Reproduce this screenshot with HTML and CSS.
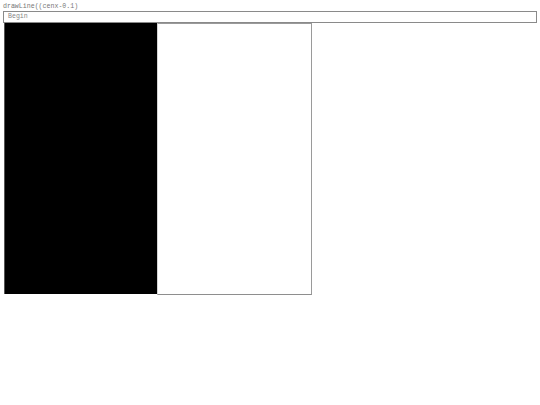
FILE: index.html
```html
<!DOCTYPE html>
<html>
<head>
<meta charset="utf-8">
<link rel="stylesheet" href="styles.css">
</head>
<body>
<div class="page">
  <div class="label">drawLine((cenx-0.1)</div>
  <button class="begin">Begin</button>
  <div class="canvases">
    <div class="canvas canvas-dark"></div>
    <div class="canvas canvas-light"></div>
  </div>
</div>
</body>
</html>
```
FILE: styles.css
```css
html, body {
  margin: 0;
  padding: 0;
  background: #fff;
}
.page {
  padding: 3px 3px 0 3px;
  font-family: "Liberation Mono", "DejaVu Sans Mono", monospace;
  color: #777;
}
.label {
  font-size: 6.6px;
  line-height: 8px;
  height: 8px;
}
.begin {
  display: block;
  box-sizing: border-box;
  width: 534px;
  height: 12px;
  margin: 0;
  padding: 0 0 0 4px;
  border: 1px solid #8a8a8a;
  background: #fff;
  font-family: "Liberation Mono", "DejaVu Sans Mono", monospace;
  font-size: 6.6px;
  line-height: 10px;
  color: #888;
  text-align: left;
}
.canvases {
  display: flex;
  padding-left: 1px;
}
.canvas {
  box-sizing: border-box;
}
.canvas-dark {
  width: 153px;
  height: 271px;
  background: #000;
  border-left: 1px solid #555;
}
.canvas-light {
  width: 155px;
  height: 272px;
  background: #fff;
  border-top: 1px solid #9a9a9a;
  border-left: 1px solid #d4d4d4;
  border-right: 1px solid #9a9a9a;
  border-bottom: 1px solid #8e8e8e;
}
```
